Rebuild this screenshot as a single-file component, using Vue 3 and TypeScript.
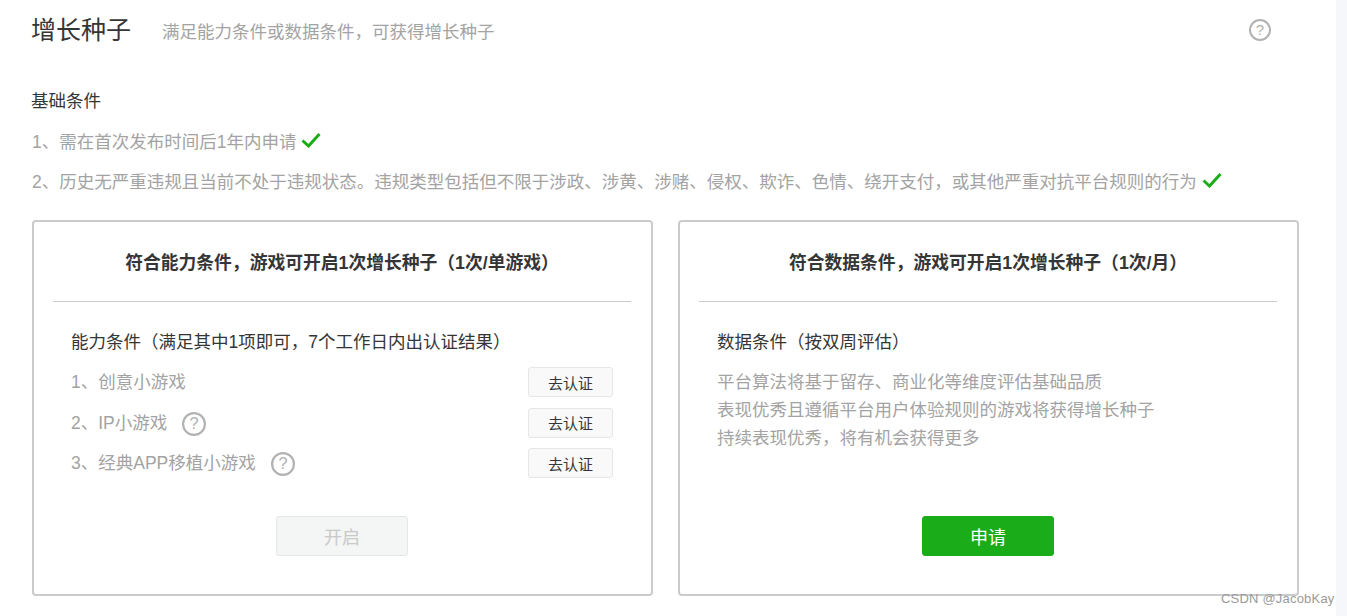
<script setup lang="ts">
const abilities = [
  { text: '1、创意小游戏', help: false },
  { text: '2、IP小游戏', help: true },
  { text: '3、经典APP移植小游戏', help: true },
]
const basics = ['1、需在首次发布时间后1年内申请', '2、历史无严重违规且当前不处于违规状态。违规类型包括但不限于涉政、涉黄、涉赌、侵权、欺诈、色情、绕开支付，或其他严重对抗平台规则的行为']
const dataLines = ['平台算法将基于留存、商业化等维度评估基础品质', '表现优秀且遵循平台用户体验规则的游戏将获得增长种子', '持续表现优秀，将有机会获得更多']
</script>

<template>
  <div class="shell">
    <main class="page">
      <header class="head">
        <h1>增长种子</h1>
        <p class="sub">满足能力条件或数据条件，可获得增长种子</p>
        <svg class="help top" viewBox="0 0 22 22"><circle cx="11" cy="11" r="10" /><text x="11" y="16" text-anchor="middle">?</text></svg>
      </header>
      <section class="basic">
        <h2>基础条件</h2>
        <p v-for="b in basics" :key="b" class="basic-row">
          <span>{{ b }}</span>
          <svg class="check" viewBox="0 0 20 16"><path d="M1.5 8.5 L7.5 14 L18.5 2" /></svg>
        </p>
      </section>
      <section class="cards">
        <article class="card">
          <h3>符合能力条件，游戏可开启1次增长种子（1次/单游戏）</h3>
          <div class="body">
            <h4>能力条件（满足其中1项即可，7个工作日内出认证结果）</h4>
            <div v-for="a in abilities" :key="a.text" class="ability">
              <span class="label">{{ a.text }}</span>
              <svg v-if="a.help" class="help inline" viewBox="0 0 22 22"><circle cx="11" cy="11" r="10" /><text x="11" y="16" text-anchor="middle">?</text></svg>
              <button class="verify">去认证</button>
            </div>
          </div>
          <button class="main disabled">开启</button>
        </article>
        <article class="card">
          <h3>符合数据条件，游戏可开启1次增长种子（1次/月）</h3>
          <div class="body">
            <h4>数据条件（按双周评估）</h4>
            <p v-for="l in dataLines" :key="l" class="line">{{ l }}</p>
          </div>
          <button class="main primary">申请</button>
        </article>
      </section>
    </main>
    <span class="mark">CSDN @JacobKay</span>
  </div>
</template>

<style>
html, body { margin: 0; background: #fff; overflow: hidden; }
</style>

<style scoped>
.shell {
  position: relative;
  width: 1347px;
  height: 616px;
  overflow: hidden;
  background: #f6f7fb;
  font-family: "Liberation Sans", "Noto Sans CJK SC", sans-serif;
}
.page {
  width: 1336px;
  height: 616px;
  box-sizing: border-box;
  background: #fff;
  padding: 0 37px 0 32px;
}
.head {
  display: flex;
  align-items: center;
  height: 60px;
}
h1 {
  margin: 0 0 0 -1px;
  font-size: 25px;
  font-weight: 400;
  color: #353535;
  line-height: 60px;
}
.sub {
  margin: 0 0 0 31px;
  font-size: 17.5px;
  color: #a3a3a3;
}
.help circle { fill: none; stroke: #b2b2b2; stroke-width: 2; }
.help text { fill: #b2b2b2; font-size: 15px; font-family: "Liberation Sans", sans-serif; }
.help.top { width: 22px; height: 22px; margin-left: auto; margin-right: 28px; }
.basic { margin-top: 21px; }
h2 {
  margin: 0 0 -1px -1px;
  font-size: 17.5px;
  font-weight: 400;
  color: #353535;
  line-height: 40px;
}
.basic-row {
  display: flex;
  align-items: center;
  margin: 0;
  height: 40px;
  font-size: 17.5px;
  color: #a3a3a3;
}
.check {
  width: 20px;
  height: 16px;
  margin-left: 5px;
  fill: none;
  stroke: #1aad19;
  stroke-width: 3;
}
.cards {
  display: flex;
  gap: 25px;
  margin-top: 20px;
}
.card {
  width: 621px;
  height: 376px;
  box-sizing: border-box;
  border: 2px solid #cbcbcb;
  border-radius: 4px;
  padding: 0 20px 0 19px;
  display: flex;
  flex-direction: column;
  align-items: center;
}
h3 {
  align-self: stretch;
  margin: 0;
  height: 77px;
  padding-top: 2px;
  line-height: 79px;
  text-align: center;
  font-size: 17.8px;
  font-weight: 700;
  color: #353535;
  border-bottom: 1px solid #cbcbcb;
}
.body {
  align-self: stretch;
  height: 214px;
  padding: 20px 18px 0;
  box-sizing: border-box;
}
h4 {
  margin: 0;
  font-size: 17.5px;
  font-weight: 400;
  color: #353535;
  line-height: 40px;
}
.ability {
  display: flex;
  align-items: center;
  height: 40.5px;
}
.label {
  font-size: 17.5px;
  color: #a3a3a3;
  margin-bottom: 3px;
}
.help.inline { width: 24px; height: 24px; margin-left: 15px; margin-top: 2px; }
.verify {
  margin-left: auto;
  width: 85px;
  height: 30px;
  padding: 0;
  box-sizing: border-box;
  border: 1px solid #e6e6e6;
  border-radius: 3px;
  background: #f9f9f9;
  color: #353535;
  font: inherit;
  font-size: 15px;
}
.line {
  margin: 0;
  font-size: 17.5px;
  line-height: 28px;
  color: #a3a3a3;
}
.line:first-of-type { margin-top: 6px; }
.main {
  width: 132px;
  height: 40px;
  padding: 0;
  box-sizing: border-box;
  border-radius: 3px;
  font: inherit;
  font-size: 18px;
}
.disabled {
  background: #f4f5f5;
  border: 1px solid #e5e6e6;
  color: #c9c9c9;
}
.primary {
  background: #1aad19;
  border: 1px solid #1aad19;
  color: #fff;
}
.mark {
  position: absolute;
  left: 1221px;
  top: 591px;
  font-size: 13px;
  color: #9a9a9a;
  letter-spacing: 0.2px;
}
</style>
